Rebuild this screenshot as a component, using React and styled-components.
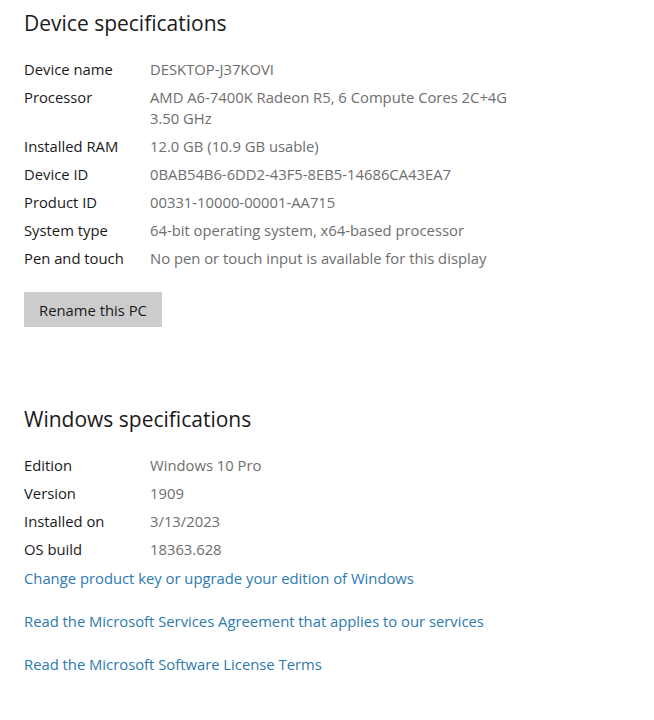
import React from "react";
import styled, { createGlobalStyle } from "styled-components";

const Global = createGlobalStyle`
  html, body { margin: 0; padding: 0; background: #ffffff; }
  body { font-family: "Open Sans", "Noto Sans", sans-serif; }
`;

const Page = styled.div`
  width: 654px;
  min-height: 720px;
  box-sizing: border-box;
  padding: 8px 0 0 24px;
  display: flex;
  flex-direction: column;
`;

const Heading = styled.h2`
  margin: ${(p) => p.$before || 0}px 0 ${(p) => p.$after}px 0;
  font-size: 21px;
  font-weight: 400;
  line-height: 30px;
  color: #1a1a1a;
`;

const SpecList = styled.dl`
  margin: 0;
  display: grid;
  grid-template-columns: 126px 1fr;
  row-gap: 7px;
`;

const Label = styled.dt`
  margin: 0;
  font-size: 14.8px;
  line-height: 21px;
  color: #1a1a1a;
`;

const Value = styled.dd`
  margin: 0;
  font-size: 14.8px;
  line-height: 21px;
  color: #6e6e6e;
  max-width: 370px;
`;

const Button = styled.button`
  align-self: flex-start;
  margin-top: 23px;
  width: 138px;
  height: 35px;
  border: none;
  background: #cccccc;
  font-family: inherit;
  font-size: 14.8px;
  color: #1a1a1a;
  padding: 0;
`;

const Links = styled.div`
  display: flex;
  flex-direction: column;
  gap: 22px;
  margin-top: 8px;
`;

const Link = styled.a`
  font-size: 14.8px;
  line-height: 21px;
  color: #2d7ab0;
  text-decoration: none;
  cursor: pointer;
`;

const device = [
  ["Device name", "DESKTOP-J37KOVI"],
  ["Processor", "AMD A6-7400K Radeon R5, 6 Compute Cores 2C+4G 3.50 GHz"],
  ["Installed RAM", "12.0 GB (10.9 GB usable)"],
  ["Device ID", "0BAB54B6-6DD2-43F5-8EB5-14686CA43EA7"],
  ["Product ID", "00331-10000-00001-AA715"],
  ["System type", "64-bit operating system, x64-based processor"],
  ["Pen and touch", "No pen or touch input is available for this display"],
];

const windows = [
  ["Edition", "Windows 10 Pro"],
  ["Version", "1909"],
  ["Installed on", "3/13/2023"],
  ["OS build", "18363.628"],
];

const Specs = ({ rows }) => (
  <SpecList>
    {rows.map(([k, v]) => (
      <React.Fragment key={k}>
        <Label>{k}</Label>
        <Value>{v}</Value>
      </React.Fragment>
    ))}
  </SpecList>
);

export default function App() {
  return (
    <Page>
      <Global />
      <Heading $after={21}>Device specifications</Heading>
      <Specs rows={device} />
      <Button>Rename this PC</Button>
      <Heading $before={77} $after={21}>Windows specifications</Heading>
      <Specs rows={windows} />
      <Links>
        <Link>Change product key or upgrade your edition of Windows</Link>
        <Link>Read the Microsoft Services Agreement that applies to our services</Link>
        <Link>Read the Microsoft Software License Terms</Link>
      </Links>
    </Page>
  );
}
